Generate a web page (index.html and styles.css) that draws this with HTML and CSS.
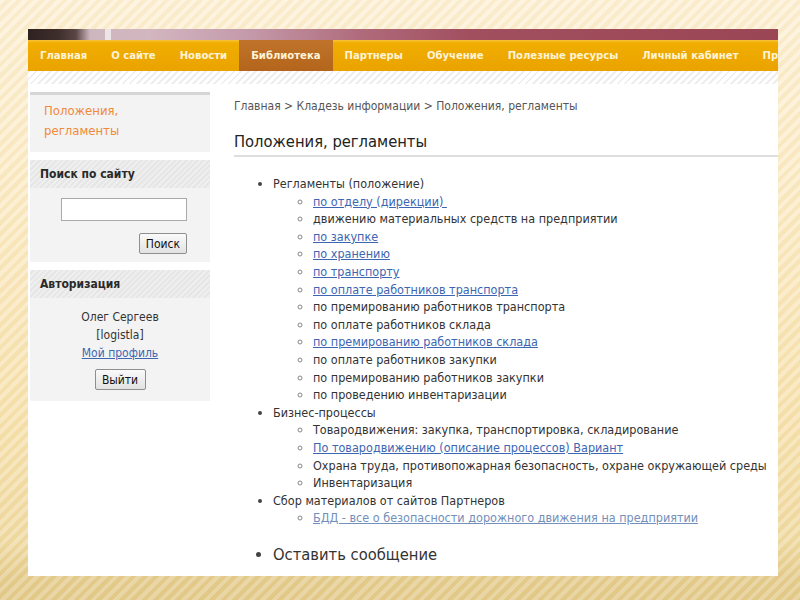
FILE: index.html
```html
<!DOCTYPE html>
<html lang="ru">
<head>
<meta charset="utf-8">
<title>Положения, регламенты</title>
<link rel="stylesheet" href="styles.css">
</head>
<body>
<div class="slide">
  <div class="shot">
    <div class="photo"><span class="photo-light"></span></div>
    <nav class="nav">
      <a class="nav-item">Главная</a>
      <a class="nav-item">О сайте</a>
      <a class="nav-item">Новости</a>
      <a class="nav-item active">Библиотека</a>
      <a class="nav-item">Партнеры</a>
      <a class="nav-item">Обучение</a>
      <a class="nav-item">Полезные ресурсы</a>
      <a class="nav-item">Личный кабинет</a>
      <a class="nav-item nav-last">Пр</a>
    </nav>
    <div class="hatch"></div>
    <div class="page">
      <aside class="sidebar">
        <div class="box box-current">
          <span class="current-link">Положения, регламенты</span>
        </div>
        <div class="box">
          <div class="box-head">Поиск по сайту</div>
          <div class="box-body search">
            <input class="search-input" type="text">
            <button class="btn">Поиск</button>
          </div>
        </div>
        <div class="box">
          <div class="box-head">Авторизация</div>
          <div class="box-body auth">
            <div>Олег Сергеев</div>
            <div>[logistla]</div>
            <a class="link">Мой профиль</a>
            <button class="btn btn-exit">Выйти</button>
          </div>
        </div>
      </aside>
      <main class="main">
        <div class="crumbs">Главная &gt; Кладезь информации &gt; Положения, регламенты</div>
        <h1 class="title">Положения, регламенты</h1>
        <ul class="list">
          <li>Регламенты (положение)
            <ul class="sub">
              <li><a class="link">по отделу (дирекции)&nbsp;</a></li>
              <li>движению материальных средств на предприятии</li>
              <li><a class="link">по закупке</a></li>
              <li><a class="link">по хранению</a></li>
              <li><a class="link">по транспорту</a></li>
              <li><a class="link">по оплате работников транспорта</a></li>
              <li>по премированию работников транспорта</li>
              <li>по оплате работников склада</li>
              <li><a class="link">по премированию работников склада</a></li>
              <li>по оплате работников закупки</li>
              <li>по премированию работников закупки</li>
              <li>по проведению инвентаризации</li>
            </ul>
          </li>
          <li>Бизнес-процессы
            <ul class="sub">
              <li>Товародвижения: закупка, транспортировка, складирование</li>
              <li><a class="link">По товародвижению (описание процессов) Вариант</a></li>
              <li>Охрана труда, противопожарная безопасность, охране окружающей среды</li>
              <li>Инвентаризация</li>
            </ul>
          </li>
          <li>Сбор материалов от сайтов Партнеров
            <ul class="sub">
              <li><a class="link visited">БДД - все о безопасности дорожного движения на предприятии</a></li>
            </ul>
          </li>
        </ul>
        <ul class="list list-big">
          <li>Оставить сообщение</li>
        </ul>
      </main>
    </div>
  </div>
</div>
</body>
</html>
```
FILE: styles.css
```css
* { box-sizing: border-box; }
html, body { margin: 0; padding: 0; }
body {
  width: 800px;
  height: 600px;
  overflow: hidden;
  font-family: "DejaVu Sans Condensed", "DejaVu Sans", sans-serif;
  background:
    repeating-linear-gradient(135deg, rgba(255,255,255,0.22) 0 4px, rgba(220,185,100,0.10) 4px 8px),
    linear-gradient(to bottom, #fdf1d8 0%, #fbebc6 35%, #f7e2b0 70%, #f0dba4 90%, #e4cc8e 96%, #e3ca8b 100%);
}
.slide {
  padding: 29px 22px 24px 28px;
  height: 600px;
}
.shot {
  width: 750px;
  height: 547px;
  background: #fff;
  overflow: hidden;
  display: flex;
  flex-direction: column;
}
.photo {
  height: 11px;
  flex: none;
  position: relative;
  background: linear-gradient(to right, #2e2220 0, #3e2e2c 30px, #5a4646 48px, #cdb7bf 62px, #d2b6c0 120px, #c49aaa 220px, #b06c7c 330px, #a14f5f 440px, #9b4655 100%);
}
.photo-light {
  position: absolute;
  left: 77px;
  top: 0;
  width: 6px;
  height: 11px;
  background: #ece4e6;
}
.nav {
  height: 31px;
  flex: none;
  display: flex;
  align-items: stretch;
  background: linear-gradient(to bottom, #f8c43a 0, #f1ad00 3px, #eaa300 100%);
  white-space: nowrap;
}
.nav-item {
  display: flex;
  align-items: center;
  padding: 0 12px;
  font-size: 11.2px;
  font-weight: bold;
  color: #fff3d6;
}
.nav-last { padding-right: 0; }
.nav-item.active {
  background: linear-gradient(to bottom, #c0732a 0, #b4651c 100%);
}
.hatch {
  height: 13px;
  flex: none;
  background: repeating-linear-gradient(135deg, #eeeeee 0 2px, #ffffff 2px 5px);
}
.page {
  display: flex;
  gap: 24px;
  padding: 8px 0 0 2px;
  flex: 1;
}
.sidebar {
  width: 180px;
  flex: none;
  display: flex;
  flex-direction: column;
  gap: 8px;
}
.box { background: #f3f3f3; }
.box-current {
  border-top: 3px solid #d6d6d6;
  padding: 6px 14px 11px;
  font-size: 13px;
  line-height: 20px;
  color: #f0893a;
}
.box-head {
  height: 28px;
  display: flex;
  align-items: center;
  padding-left: 10px;
  font-size: 12px;
  font-weight: bold;
  color: #2a2a2a;
  background:
    repeating-linear-gradient(135deg, rgba(255,255,255,0.35) 0 2px, rgba(0,0,0,0) 2px 4px),
    #e6e6e6;
}
.search {
  display: flex;
  flex-direction: column;
  align-items: flex-end;
  gap: 12px;
  padding: 10px 23px 8px;
}
.search-input {
  width: 126px;
  height: 23px;
  border: 1px solid #a9a9a9;
  background: #fff;
}
.btn {
  font-family: "DejaVu Sans Condensed", "DejaVu Sans", sans-serif;
  font-size: 12px;
  height: 21px;
  padding: 0 6px;
  color: #111;
  border: 1px solid #8e8e8e;
  border-radius: 2px;
  background: linear-gradient(to bottom, #fafafa, #e2e2e2);
}
.auth {
  display: flex;
  flex-direction: column;
  align-items: center;
  padding: 10px 0 11px;
  font-size: 12px;
  line-height: 18px;
  color: #333;
}
.btn-exit { margin-top: 7px; width: 51px; }
.link {
  color: #3d66b2;
  text-decoration: underline;
}
.link.visited { color: #7390bb; }
.main {
  flex: 1;
  color: #333;
}
.crumbs {
  margin-top: 6px;
  font-size: 12px;
  line-height: 16px;
  color: #555;
}
.title {
  margin: 18px 0 0;
  padding-bottom: 3px;
  font-size: 16.4px;
  line-height: 20px;
  font-weight: normal;
  color: #222;
  border-bottom: 2px solid #dedede;
}
.list {
  margin: 18px 0 0;
  padding-left: 39px;
  font-size: 12.5px;
  line-height: 17.6px;
  list-style: disc;
}
.sub {
  margin: 0;
  padding-left: 40px;
  list-style: circle;
}
.list li::marker { color: #444; }
.sub li::marker { color: #888; }
.list-big {
  margin-top: 18px;
  font-size: 16.4px;
  line-height: 20px;
}
```
